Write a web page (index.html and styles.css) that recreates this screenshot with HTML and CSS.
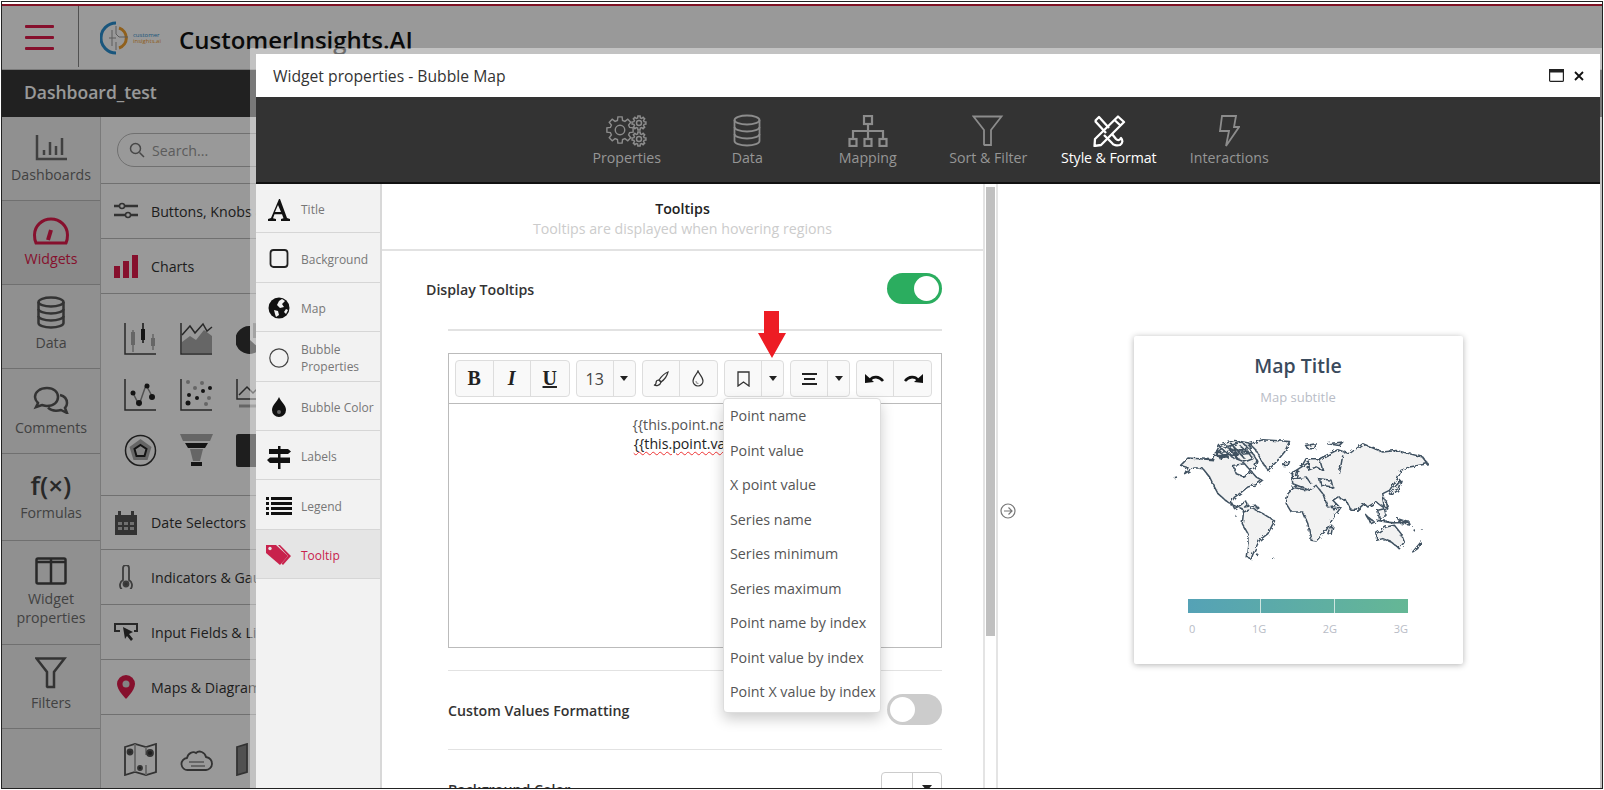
FILE: index.html
```html
<!DOCTYPE html>
<html lang="en">
<head>
  <meta charset="UTF-8" />
  <meta name="viewport" content="width=device-width, initial-scale=1.0"/>
  <title>Widget properties - Bubble Map</title>
  <link rel="stylesheet" href="styles.css">
</head>
<body>

<svg class="sprite" width="0" height="0">
  <defs>
    <g id="gear">
      <polygon points="-2.7,-10.1 -2.2,-13.8 2.2,-13.8 2.7,-10.1 5.2,-9.05 8.2,-11.3 11.3,-8.2 9.05,-5.2 10.1,-2.7 13.8,-2.2 13.8,2.2 10.1,2.7 9.05,5.2 11.3,8.2 8.2,11.3 5.2,9.05 2.7,10.1 2.2,13.8 -2.2,13.8 -2.7,10.1 -5.2,9.05 -8.2,11.3 -11.3,8.2 -9.05,5.2 -10.1,2.7 -13.8,2.2 -13.8,-2.2 -10.1,-2.7 -9.05,-5.2 -11.3,-8.2 -8.2,-11.3 -5.2,-9.05"/>
      <circle r="5"/>
    </g>
    <g id="db">
      <ellipse cx="14" cy="6" rx="12.5" ry="4.5"/>
      <path d="M1.5 6v21c0 2.5 5.6 4.5 12.5 4.5s12.5-2 12.5-4.5V6"/>
      <path d="M1.5 13c0 2.5 5.6 4.5 12.5 4.5s12.5-2 12.5-4.5M1.5 20c0 2.5 5.6 4.5 12.5 4.5s12.5-2 12.5-4.5"/>
    </g>
    <g id="funnel">
      <path d="M1.5 1.5h28L19 15v15l-6.500 0-.5-.5V15z"/>
    </g>
    <filter id="rough" x="-2%" y="-2%" width="104%" height="104%">
      <feTurbulence type="fractalNoise" baseFrequency=".09" numOctaves="2" seed="4"/>
      <feDisplacementMap in="SourceGraphic" scale="13"/>
    </filter>
  </defs>
</svg>

<div class="screen">
  <div class="app">
    <header class="topbar">
      <div class="burger"><span></span><span></span><span></span></div>
      <div class="brand">
        <svg class="logo" width="66" height="34" viewBox="0 0 66 34">
          <path d="M16 2A15 15 0 0 0 16 32" fill="none" stroke="#2b8fd0" stroke-width="3"/>
          <path d="M19 7A10.500 10.500 0 0 1 19 27" fill="none" stroke="#f0a030" stroke-width="3"/>
          <path d="M9 17h7M12 9v16M16 5v8l3 3h9M16 29v-8" fill="none" stroke="#999" stroke-width="1"/>
          <text x="33" y="16" class="logo-a">customer</text>
          <text x="33" y="22" class="logo-b">insights.ai</text>
        </svg>
        <span class="brand-name">CustomerInsights.AI</span>
      </div>
    </header>
    <div class="dashbar">Dashboard_test</div>

    <div class="workspace">
      <nav class="rail">
        <div class="rail-item">
          <svg width="32" height="26" viewBox="0 0 32 26" fill="none" stroke="#6b6b6b" stroke-width="2.500"><path d="M2 0v24h30"/><path d="M9 20v-5M15 20V7M21 20v-9M27 20V3"/></svg>
          <span>Dashboards</span>
        </div>
        <div class="rail-item active">
          <svg width="36" height="28" viewBox="0 0 36 28" fill="none" stroke="#e01b4c" stroke-width="3"><path d="M3 26c-1.500-3-1.500-5-1.500-8a16.500 16 0 0 1 33 0c0 3 0 5-1.500 8z"/><path d="M15 23l3-10" stroke-width="4"/></svg>
          <span>Widgets</span>
        </div>
        <div class="rail-item">
          <svg width="28" height="33" viewBox="0 0 28 33" fill="none" stroke="#555" stroke-width="2.500"><use href="#db"/></svg>
          <span>Data</span>
        </div>
        <div class="rail-item">
          <svg width="36" height="28" viewBox="0 0 36 28" fill="none" stroke="#555" stroke-width="2.500"><path d="M14 2C7 2 2 6 2 11c0 2.500 1 4 3 6l-2 4 6-2c2 .6 3 1 5 1 7 0 11-4 11-9s-4-9-11-9z"/><path d="M27 9c4 1 7 4 7 8 0 2-1 4-2 5l2 5-6-3c-2 .6-3 .7-5 .7-3 0-6-1-8-3"/></svg>
          <span>Comments</span>
        </div>
        <div class="rail-item">
          <span class="fx">f(×)</span>
          <span>Formulas</span>
        </div>
        <div class="rail-item">
          <svg width="32" height="28" viewBox="0 0 32 28" fill="none" stroke="#444" stroke-width="2.500"><rect x="1.500" y="1.500" width="29" height="25" rx="1.500"/><path d="M16 2v24M2 5h28" /></svg>
          <span>Widget<br>properties</span>
        </div>
        <div class="rail-item">
          <svg width="32" height="32" viewBox="0 0 32 32" fill="none" stroke="#555" stroke-width="2.500"><use href="#funnel"/></svg>
          <span>Filters</span>
        </div>
        <div class="rail-item"></div>
      </nav>

      <aside class="library">
        <div class="search-wrap">
          <div class="search">
            <svg width="16" height="16" viewBox="0 0 16 16" fill="none" stroke="#777" stroke-width="1.500"><circle cx="6.500" cy="6.500" r="5"/><path d="M10.500 10.500L15 15"/></svg>
            <span>Search...</span>
          </div>
        </div>
        <div class="lib-row">
          <svg width="24" height="18" viewBox="0 0 24 18" fill="none" stroke="#555" stroke-width="2.500"><path d="M0 4h5M11 4h13M0 13h11M17 13h7"/><circle cx="8" cy="4" r="2.500" stroke-width="1.500"/><circle cx="14" cy="13" r="2.500" stroke-width="1.500"/></svg>
          <span>Buttons, Knobs &amp; Sliders</span>
        </div>
        <div class="lib-row">
          <svg width="24" height="24" viewBox="0 0 24 24" fill="#e01b4c"><rect x="0" y="12" width="6" height="12"/><rect x="9" y="7" width="6" height="17"/><rect x="18" y="1" width="6" height="23"/></svg>
          <span>Charts</span>
        </div>
        <div class="icon-grid">
          <svg width="33" height="33" viewBox="0 0 33 33" fill="none" stroke="#444" stroke-width="1.500"><path d="M1 1v31h31"/><path d="M9 8v22M29 12v16" stroke="#aaa"/><path d="M19 1v20" stroke="#222"/><rect x="7" y="10" width="4" height="13" fill="#aaa" stroke="none"/><rect x="17" y="7" width="4" height="11" fill="#222" stroke="none"/><rect x="27" y="16" width="4" height="8" fill="#aaa" stroke="none"/></svg>
          <svg width="33" height="33" viewBox="0 0 33 33" fill="none" stroke="#444" stroke-width="1.500"><path d="M1 1v31h31"/><path d="M2 31V20l8-6 6 4 8-10 8 6v17z" fill="#aaa" stroke="none"/><path d="M2 13l8-9 5 7 8-9 4 7 5-4"/></svg>
          <svg width="33" height="33" viewBox="0 0 33 33" fill="#333"><path d="M14 4A14 14 0 1 0 24 27L14 18z"/><path d="M17 1A15 15 0 0 1 32 16H17z" fill="#aaa"/></svg>
          <svg width="33" height="33" viewBox="0 0 33 33" fill="none" stroke="#444" stroke-width="1.500"><path d="M1 1v31h31"/><path d="M9 15l6 12 7-20 6 11" stroke="#888"/><g fill="#222" stroke="none"><circle cx="9" cy="15" r="2.500"/><circle cx="15" cy="25" r="3"/><circle cx="23" cy="8" r="2.500"/><circle cx="28" cy="19" r="3"/></g></svg>
          <svg width="33" height="33" viewBox="0 0 33 33" fill="none" stroke="#444" stroke-width="1.500"><path d="M1 1v31h31"/><g fill="#aaa" stroke="none"><circle cx="8" cy="4" r="2"/><circle cx="15" cy="10" r="2"/><circle cx="22" cy="5" r="2"/><circle cx="29" cy="20" r="2"/><circle cx="26" cy="26" r="2"/></g><g fill="#222" stroke="none"><circle cx="23" cy="13" r="2"/><circle cx="30" cy="10" r="2"/><circle cx="8" cy="25" r="2.500"/><circle cx="17" cy="20" r="2"/><circle cx="9" cy="17" r="2"/></g></svg>
          <svg width="33" height="33" viewBox="0 0 33 33" fill="none" stroke="#444" stroke-width="1.500"><path d="M1 1v20h31"/><path d="M3 17l8-8 6 6 10-10"/><path d="M3 28h26" stroke="#aaa" stroke-width="3"/></svg>
          <svg width="33" height="33" viewBox="0 0 33 33" fill="none" stroke="#333" stroke-width="1.500"><circle cx="16.500" cy="16.500" r="15"/><path d="M16.500 5l11 8-4 13h-14l-4-13z" fill="#aaa" stroke="none"/><path d="M16.500 11l6 4-2 7h-8l-2-7z" fill="#ddd" stroke="#222" stroke-width="2"/></svg>
          <svg width="33" height="33" viewBox="0 0 33 33" fill="#aaa"><path d="M0 0h33l-3 7H3z"/><path d="M5 9h23l-3 5H8z" fill="#222"/><path d="M10 15h13l-3 12h-7z"/><rect x="11" y="28" width="11" height="4" fill="#222"/></svg>
          <svg width="33" height="33" viewBox="0 0 33 33" fill="#333"><rect width="33" height="33" rx="2"/></svg>
        </div>
        <div class="lib-row tall">
          <svg width="24" height="24" viewBox="0 0 24 24" fill="#555"><path d="M1 4h3V0h3v4h10V0h3v4h3v20H1z"/><g fill="#bbb"><rect x="4" y="11" width="4" height="3"/><rect x="10" y="11" width="4" height="3"/><rect x="16" y="11" width="4" height="3"/><rect x="4" y="16" width="4" height="3"/><rect x="10" y="16" width="4" height="3"/><rect x="16" y="16" width="4" height="3"/></g></svg>
          <span>Date Selectors</span>
        </div>
        <div class="lib-row">
          <svg width="24" height="24" viewBox="0 0 24 24" fill="none" stroke="#666" stroke-width="1.800"><path d="M9 15V3a3 3 0 0 1 6 0v12a6 6 0 1 1-6 0z"/><circle cx="12" cy="19" r="2.500" fill="#555"/></svg>
          <span>Indicators &amp; Gauges</span>
        </div>
        <div class="lib-row">
          <svg width="24" height="20" viewBox="0 0 24 20" fill="none" stroke="#444" stroke-width="2"><path d="M6 9H1V2h22v7h-3"/><path d="M9 5l10 5-4 2 4 5-2 2-4-5-2 3z" fill="#333" stroke="none"/></svg>
          <span>Input Fields &amp; Lists</span>
        </div>
        <div class="lib-row">
          <svg width="24" height="24" viewBox="0 0 24 24"><path d="M12 0a9 9 0 0 0-9 9c0 6 9 15 9 15s9-9 9-15a9 9 0 0 0-9-9z" fill="#e01b4c"/><circle cx="12" cy="9" r="3.500" fill="#ddd"/></svg>
          <span>Maps &amp; Diagrams</span>
        </div>
        <div class="icon-grid last">
          <svg width="33" height="33" viewBox="0 0 33 33" fill="none" stroke="#555" stroke-width="1.800"><path d="M1 4l10-3 11 3 10-3v28l-10 3-11-3-10 3z"/><path d="M11 1v28M22 4v8M22 22v10" stroke="#aaa"/><circle cx="6" cy="9" r="2.500" fill="#444"/><circle cx="26" cy="10" r="3" fill="#333"/><circle cx="16" cy="25" r="2" fill="#333"/></svg>
          <svg width="33" height="33" viewBox="0 0 33 33" fill="none" stroke="#555" stroke-width="1.800"><path d="M8 27a6 6 0 0 1-1-12c1-5 6-7 9-5 3-3 9-1 10 4 5 1 6 4 6 7s-3 6-6 6z"/><path d="M9 19h15M11 23h14" stroke="#aaa"/></svg>
          <svg width="33" height="33" viewBox="0 0 33 33" fill="none" stroke="#555" stroke-width="1.800"><path d="M1 4l10-3v28l-10 3z" fill="#888"/></svg>
        </div>
      </aside>
    </div>
    <div class="dim"></div>
  </div>

  <section class="modal">
    <div class="modal-title">
      <span>Widget properties - Bubble Map</span>
      <div class="window-btns">
        <svg width="15" height="13" viewBox="0 0 15 13" fill="none" stroke="#222" stroke-width="1.200"><rect x=".6" y=".6" width="13.800" height="11.800" rx="1"/><rect x="0" y="0" width="15" height="3.500" fill="#222" stroke="none"/></svg>
        <svg width="10" height="10" viewBox="0 0 10 10" fill="none" stroke="#111" stroke-width="1.800"><path d="M1 1l8 8M9 1l-8 8"/></svg>
      </div>
    </div>

    <div class="tabs">
      <div class="tab">
        <svg width="42" height="32" viewBox="0 0 42 32" fill="none" stroke="#8c8c8c" stroke-width="1.500">
          <use href="#gear" transform="translate(14 15) scale(.95)"/>
          <use href="#gear" transform="translate(33 8) scale(.5)" stroke-width="3"/>
          <use href="#gear" transform="translate(33 24) scale(.5)" stroke-width="3"/>
        </svg>
        <span>Properties</span>
      </div>
      <div class="tab">
        <svg width="28" height="33" viewBox="0 0 28 33" fill="none" stroke="#8c8c8c" stroke-width="1.800"><use href="#db"/></svg>
        <span>Data</span>
      </div>
      <div class="tab">
        <svg width="40" height="32" viewBox="0 0 40 32" fill="none" stroke="#8c8c8c" stroke-width="2.200"><rect x="16" y="1" width="8" height="8"/><path d="M20 9v7M5 23v-7h30v7M20 16v7"/><rect x="1.500" y="24" width="7" height="7"/><rect x="16.500" y="24" width="7" height="7"/><rect x="31.500" y="24" width="7" height="7"/></svg>
        <span>Mapping</span>
      </div>
      <div class="tab">
        <svg width="32" height="32" viewBox="0 0 32 32" fill="none" stroke="#8c8c8c" stroke-width="1.800"><use href="#funnel"/></svg>
        <span>Sort &amp; Filter</span>
      </div>
      <div class="tab active">
        <svg width="34" height="32" viewBox="0 0 34 32" fill="none" stroke="#fff" stroke-width="2.300" stroke-linejoin="round"><path d="M3 6l4-4 10 11M12 20l8 8c1 2 5 3 8 2 3-2 3-5 1-7-1 2-3 3-5 1l-4-5"/><path d="M3 6l11 12"/><path d="M26 1.500l6 5.500L9 30l-6.500 1 .5-7zM22.500 5l6 5.500"/></svg>
        <span>Style &amp; Format</span>
      </div>
      <div class="tab">
        <svg width="22" height="32" viewBox="0 0 22 32" fill="none" stroke="#8c8c8c" stroke-width="1.800"><path d="M4 1h14l-2 11h5L8 31l3-15H2z"/></svg>
        <span>Interactions</span>
      </div>
    </div>

    <div class="modal-body">
      <ul class="side">
        <li>
          <svg width="24" height="24" viewBox="0 0 24 24" fill="#111"><path d="M12 1h1l7 19 3 1v2h-9v-2l2.500-.7-1.500-4H7.500l-1.500 4 3 .7v2H1v-2l3-1zM11 7l-3 7h6z"/></svg>
          <span>Title</span>
        </li>
        <li>
          <svg width="24" height="24" viewBox="0 0 24 24" fill="none" stroke="#222" stroke-width="1.800"><rect x="3.500" y="3" width="17" height="17" rx="3"/></svg>
          <span>Background</span>
        </li>
        <li>
          <svg width="24" height="24" viewBox="0 0 24 24"><circle cx="12" cy="12" r="10.500" fill="#111"/><path d="M12 5l3-2 3 2-3 3 2 3-4 1-3-3zM7 14l4 1 1 4-3 2-1-3zM19 13l2 1-2 4-2-2z" fill="#f2f2f2"/></svg>
          <span>Map</span>
        </li>
        <li>
          <svg width="24" height="24" viewBox="0 0 24 24" fill="none" stroke="#444" stroke-width="1.200"><circle cx="12" cy="12" r="9.200"/></svg>
          <span>Bubble Properties</span>
        </li>
        <li>
          <svg width="24" height="24" viewBox="0 0 24 24"><path d="M12 2c2 5 7 8 7 13a7 7 0 0 1-14 0c0-5 5-8 7-13z" fill="#111"/><circle cx="12" cy="17" r="2" fill="#666"/></svg>
          <span>Bubble Color</span>
        </li>
        <li>
          <svg width="24" height="24" viewBox="0 0 24 24" fill="#111"><rect x="11" y="1" width="2.500" height="23"/><path d="M2 4h19l3 2.500L21 9H2zM0 15l3-2.500h20V18H3z"/></svg>
          <span>Labels</span>
        </li>
        <li>
          <svg class="wide" width="26" height="20" viewBox="0 0 26 20" fill="#111"><path d="M0 1h3v3H0zM5 1h21v3H5zM0 6h3v3H0zM5 6h21v3H5zM0 11h3v3H0zM5 11h21v3H5zM0 16h3v3H0zM5 16h21v3H5z"/></svg>
          <span>Legend</span>
        </li>
        <li class="current">
          <svg class="wide" width="26" height="22" viewBox="0 0 26 22"><path d="M0 1h10l12 11-8 9L0 9z" fill="#c8224c"/><path d="M14 1l11 11-8 9-1.500-1.500 6.500-7.500L12 1z" fill="#c8224c"/><circle cx="4" cy="4.500" r="1.700" fill="#e5e5e5"/></svg>
          <span>Tooltip</span>
        </li>
      </ul>

      <div class="settings">
        <div class="settings-head">
          <h3>Tooltips</h3>
          <p>Tooltips are displayed when hovering regions</p>
        </div>
        <div class="setting-row first">
          <span>Display Tooltips</span>
          <span class="toggle on"></span>
        </div>
        <div class="settings-inner">
          <div class="editor">
            <div class="ed-toolbar">
              <div class="ed-group">
                <button class="ed-btn serif bold">B</button>
                <button class="ed-btn serif italic">I</button>
                <button class="ed-btn serif under">U</button>
              </div>
              <div class="ed-group">
                <button class="ed-btn size">13</button>
                <button class="ed-btn caret"></button>
              </div>
              <div class="ed-group">
                <button class="ed-btn">
                  <svg width="16" height="16" viewBox="0 0 16 16" fill="none" stroke="#333" stroke-width="1.200"><path d="M15 1c-3 1-7 5-9 8l2 2c3-2 6-6 7-10z"/><path d="M6 9c-2 0-3 1-3 3 0 1-1 2-2 2 2 1 6 1 7-3z"/></svg>
                </button>
                <button class="ed-btn">
                  <svg width="14" height="17" viewBox="0 0 14 17" fill="none" stroke="#333" stroke-width="1.200"><path d="M7 1c1 3 5 6 5 10a5 5 0 0 1-10 0c0-4 4-7 5-10z"/><path d="M5 11c0 1.500 1 2.500 2.500 2.500" stroke="#999"/></svg>
                </button>
              </div>
              <div class="ed-group">
                <button class="ed-btn">
                  <svg width="13" height="16" viewBox="0 0 13 16" fill="none" stroke="#333" stroke-width="1.300"><path d="M1 1h11v14l-5.500-4L1 15z"/></svg>
                </button>
                <button class="ed-btn caret"></button>
              </div>
              <div class="ed-group">
                <button class="ed-btn">
                  <svg width="15" height="12" viewBox="0 0 15 12" fill="none" stroke="#222" stroke-width="2"><path d="M0 1h15M2 6h11M0 11h15"/></svg>
                </button>
                <button class="ed-btn caret"></button>
              </div>
              <div class="ed-group">
                <button class="ed-btn">
                  <svg width="20" height="11" viewBox="0 0 20 11"><path d="M5 7C8 3 14 3 18 8" fill="none" stroke="#111" stroke-width="2.600"/><path d="M0 1l9 8-9 1z" fill="#111"/></svg>
                </button>
                <button class="ed-btn">
                  <svg width="20" height="11" viewBox="0 0 20 11"><path d="M15 7C12 3 6 3 2 8" fill="none" stroke="#111" stroke-width="2.600"/><path d="M20 1l-9 8 9 1z" fill="#111"/></svg>
                </button>
              </div>
            </div>
            <div class="ed-text">
              <div class="ed-line">{{this.point.name}}</div>
              <div class="ed-line strong"><span class="squiggle">{{this.point.value}}</span></div>
            </div>
          </div>
          <ul class="dropdown">
            <li>Point name</li>
            <li>Point value</li>
            <li>X point value</li>
            <li>Series name</li>
            <li>Series minimum</li>
            <li>Series maximum</li>
            <li>Point name by index</li>
            <li>Point value by index</li>
            <li>Point X value by index</li>
          </ul>
          <svg class="red-arrow" width="28" height="48" viewBox="0 0 28 48"><path d="M6 0h15v22h7L14 47 0 22h6z" fill="#ed1c24"/></svg>
          <div class="setting-row ruled">
            <span>Custom Values Formatting</span>
            <span class="toggle"></span>
          </div>
          <div class="setting-row ruled">
            <span>Background Color</span>
            <span class="color-pick"><i></i><b></b></span>
          </div>
        </div>
      </div>

      <div class="scroll"><div class="thumb"></div></div>

      <div class="preview">
        <svg class="collapse" width="16" height="16" viewBox="0 0 16 16" fill="none" stroke="#777" stroke-width="1.200"><circle cx="8" cy="8" r="7"/><path d="M4 8h8M8.500 4.500L12 8l-3.500 3.500"/></svg>
        <div class="map-card">
          <h4>Map Title</h4>
          <p class="map-sub">Map subtitle</p>
          <svg class="world" width="258" height="125" viewBox="160 320 775 375" fill="#f2f2f2" stroke="#3f5161" stroke-width="4.500" stroke-linejoin="round">
            <g filter="url(#rough)">
              <path d="M183 405L205 383 240 385 282 388 290 365 300 345 345 330 388 338 395 362 412 390 405 412 392 420 410 440 428 450 412 462 385 470 360 490 345 500 335 515 345 535 362 525 378 512 385 522 375 530 405 525 415 530 395 540 372 545 368 535 350 528 330 520 312 505 295 490 282 465 270 440 250 415 225 412 195 430 205 412z"/>
              <path d="M340 405L375 400 392 420 375 440 350 430z" fill="#fff"/>
              <path d="M285 375L310 350 340 345 350 365 320 375zM320 350L365 335 385 350 365 362 340 358zM345 370L385 362 400 385 375 395 350 385zM290 360L330 385M300 350L345 385M320 345L360 390M335 340L375 385M360 345L395 375M300 385L345 372M285 368L390 355M295 380L400 368"/>
              <path d="M390 340L430 328 510 333 495 365 470 395 445 420 425 390 410 360z"/>
              <path d="M490 398L510 394 505 405 490 405zM164 442L172 440M348 558L350 560M412 675L418 675M458 683L464 685"/>
              <path d="M372 545L400 535 430 550 465 572 445 610 420 630 405 660 395 685 380 680 385 640 385 610 368 580z"/>
              <path d="M505 490L530 465 590 465 620 480 640 535 665 530 640 565 620 600 590 632 575 630 565 580 550 545 515 545 500 520z"/>
              <path d="M632 590L640 588 635 612 625 610z"/>
              <path d="M520 460L515 430 545 410 560 385 600 385 655 358 690 370 730 340 790 365 830 360 910 380 925 400 870 410 845 420 835 445 810 480 790 490 795 515 790 530 770 515 745 530 735 520 712 540 695 540 680 510 655 500 640 510 655 525 625 530 610 490 590 465 570 480 545 470z"/>
              <path d="M545 410L570 395 565 420 590 410 610 420 600 385M515 470L555 478M600 445L635 450 640 470 605 465zM530 445L560 440 575 460M670 375L660 430" fill="none"/>
              <path d="M520 425L535 420 530 445 518 445zM835 460L845 450 835 480 815 495 810 490zM558 345L590 340 585 355 565 355zM625 340L670 335 660 345z"/>
              <path d="M740 555L765 575 755 580zM770 570L830 575 870 575 820 578zM775 540L795 535 800 555 780 565zM790 505L800 510 805 535 795 530zM835 565L865 575 875 585 845 580zM880 595L885 600M905 595L910 597"/>
              <path d="M770 610L800 590 825 585 845 610 855 635 840 655 815 635 790 625 772 630z"/>
              <path d="M880 665L905 635 895 655z"/>
            </g>
          </svg>
          <div class="legend-bar"><i></i><i></i><i></i></div>
          <div class="legend-labels"><span>0</span><span>1G</span><span>2G</span><span>3G</span></div>
        </div>
      </div>
    </div>
  </section>
</div>

</body>
</html>
```

FILE: styles.css
```css
* { box-sizing: border-box; }
html, body { margin: 0; height: 100%; overflow: hidden; background: #fff; }
body { font-family: "Open Sans", sans-serif; }
.sprite { position: absolute; }

.screen {
  position: relative; width: 1602px; height: 788px; margin: 1px;
  border: 1px solid #222; padding-top: 2px; overflow: hidden;
}
.app { position: relative; height: 100%; display: flex; flex-direction: column; border-top: 2px solid #d8203f; background: #fff; }
.dim { position: absolute; inset: -2px 0 0 0; background: rgba(0,0,0,.4); }

.topbar { display: flex; height: 64px; border-bottom: 1px solid #ccc; }
.burger { width: 77px; padding: 19px 0 0 23px; border-right: 1px solid #888; margin-bottom: 2px; }
.burger span { display: block; width: 29px; height: 3px; background: #e01b4c; margin-bottom: 8px; border-radius: 1px; }
.brand { display: flex; align-items: center; gap: 14px; padding-left: 21px; }
.logo { display: block; }
.logo-a { font-size: 6px; fill: #2b8fd0; }
.logo-b { font-size: 6px; fill: #f0a030; }
.brand-name { font-size: 24px; font-weight: 600; color: #111; line-height: 1; padding-top: 5px; margin-left: -1px; }

.dashbar { height: 47px; background: #383838; color: #fff; font-size: 17.500px; font-weight: 600; line-height: 44px; padding-left: 22px; }

.workspace { flex: 1; display: flex; min-height: 0; }
.rail {
  width: 99px; flex: none; display: grid; background: #f0f0f0; border-right: 1px solid #ccc;
  grid-template-rows: 84px 84px 84px 85px 87px 104px 84px 1fr;
}
.rail-item {
  display: flex; flex-direction: column; align-items: center; justify-content: flex-end;
  padding-bottom: 16px; gap: 4px; border-bottom: 1px solid #bbb;
  font-size: 14.200px; line-height: 19px; color: #6e6e6e; text-align: center;
}
.rail-item:nth-child(5) { padding-bottom: 18px; }
.rail-item:nth-child(6) { padding-bottom: 17px; }
.rail-item:last-child { border: 0; }
.rail-item.active { background: #e4e4e4; color: #e01b4c; }
.fx { font-size: 26px; font-weight: 600; line-height: 28px; color: #444; }

.library { width: 157px; flex: none; background: #fff; overflow: hidden; }
.search-wrap { height: 67px; padding: 16px 0 0 16px; border-bottom: 1px solid #bbb; }
.search {
  display: flex; align-items: center; gap: 7px; width: 240px; height: 34px; padding-left: 11px;
  border: 1px solid #bbb; border-radius: 17px; font-size: 14.200px; color: #999;
}
.lib-row {
  display: flex; align-items: center; height: 55px; padding-left: 13px; gap: 13px;
  border-bottom: 1px solid #bbb; font-size: 14.200px; color: #333; white-space: nowrap;
}
.lib-row svg { flex: none; }
.lib-row.tall { height: 54px; border-top: 0; }
.icon-grid {
  display: grid; grid-template-columns: repeat(3, 33px); column-gap: 23px; row-gap: 23px; align-content: start;
  padding: 28px 0 0 23px; height: 202px; border-bottom: 1px solid #bbb;
}
.icon-grid.last { height: auto; border: 0; }

.modal {
  position: absolute; left: 254px; top: 52px; width: 1344px; height: 750px;
  display: flex; flex-direction: column; background: #fff;
  box-shadow: 0 0 0 6px rgba(255,255,255,.4);
}
.modal-title {
  height: 43px; flex: none; display: flex; align-items: center; justify-content: space-between;
  padding: 0 16px 0 17px; font-size: 15.700px; font-weight: 500; color: #333;
}
.window-btns { display: flex; align-items: center; gap: 10px; }
.tabs { height: 87px; flex: none; display: flex; justify-content: center; background: #333; border-bottom: 2px solid #111; }
.tab {
  width: 120.500px; display: flex; flex-direction: column; align-items: center; justify-content: flex-end;
  padding-bottom: 15px; gap: 1px; color: #969696; font-size: 14.200px; line-height: 19px;
}
.tab.active { color: #fff; font-weight: 500; letter-spacing: -.1px; }

.modal-body { flex: 1; display: flex; min-height: 0; }
.side { list-style: none; margin: 0; padding: 0; width: 126px; flex: none; background: #f2f2f2; border-right: 2px solid #d8d8d8; }
.side li {
  display: flex; align-items: center; height: 49.400px; padding: 3px 0 0 11px; gap: 10px;
  border-bottom: 1px solid #d6d6d6; font-size: 12px; line-height: 17px; color: #777;
}
.side li svg { flex: none; }
.side li svg.wide { margin: 0 -1px; }
.side li.current { background: #e5e5e5; color: #c8224c; }

.settings { width: 601px; flex: none; color: #333; position: relative; }
.settings-head { height: 67px; border-bottom: 2px solid #e2e2e2; text-align: center; padding-top: 15px; }
.settings-head h3 { margin: 0; font-size: 14.200px; line-height: 19px; font-weight: 600; color: #222; }
.settings-head p { margin: 1px 0 0; font-size: 14.200px; line-height: 19px; color: #ccc; }
.setting-row { display: flex; align-items: center; justify-content: space-between; font-size: 14.200px; font-weight: 600; color: #333; }
.setting-row.first { height: 78px; padding: 0 41px 1px 44px; }
.settings-inner { position: relative; margin: 0 41px 0 66px; border-top: 2px solid #e2e2e2; padding-top: 22px; }
.setting-row.ruled { height: 80px; border-bottom: 1px solid #e2e2e2; }
.toggle { position: relative; width: 55px; height: 31px; border-radius: 16px; background: #ccc; margin-bottom: 2px; }
.toggle::after { content: ""; position: absolute; left: 3px; top: 3px; width: 25px; height: 25px; border-radius: 50%; background: #fff; }
.toggle.on { background: #2bad5f; }
.toggle.on::after { left: 27px; }

.editor { height: 295px; border: 1px solid #bbb; margin-bottom: 22px; }
.editor + .dropdown + .red-arrow + .setting-row { border-top: 1px solid #e2e2e2; }
.ed-toolbar { display: flex; gap: 6.200px; height: 50px; padding: 6px 0 0 6px; background: #fff; border-bottom: 1px solid #bbb; }
.ed-group { display: flex; height: 37px; border: 1px solid #ddd; border-radius: 4px; background: #f9f9f9; }
.ed-btn {
  width: 37px; display: flex; align-items: center; justify-content: center; padding: 0;
  border: 0; border-right: 1px solid #ddd; background: none; font-family: inherit; font-size: 16px; color: #444;
}
.ed-btn:last-child { border-right: 0; }
.ed-btn.serif { width: 37.500px; font-family: "Liberation Serif", serif; font-size: 20px; color: #222; }
.bold { font-weight: 700; }
.italic { font-style: italic; font-weight: 700; }
.under { text-decoration: underline; font-weight: 700; }
.ed-btn.caret { width: 21px; }
.ed-btn.caret::after { content: ""; border: 4px solid transparent; border-top: 5px solid #222; border-bottom: 0; }
.ed-text { text-align: center; padding-top: 11px; font-size: 14.200px; line-height: 19px; color: #555; }
.ed-line.strong { color: #222; font-weight: 500; }
.squiggle { text-decoration: underline wavy #e33 1px; text-underline-offset: 2px; }

.dropdown {
  position: absolute; left: 275px; top: 67px; width: 158px; height: 315px; margin: 0; padding: 0 6px; list-style: none;
  background: #fff; border: 1px solid #ddd; border-radius: 4px; box-shadow: 0 6px 14px rgba(0,0,0,.2);
  font-size: 14.300px; line-height: 34.500px; color: #555; white-space: nowrap;
}
.dropdown li { height: 34.500px; }
.red-arrow { position: absolute; left: 310px; top: -20px; }
.color-pick { display: flex; width: 61px; height: 36px; border: 1px solid #ccc; border-radius: 4px; }
.color-pick i { flex: 1; border-right: 1px solid #ccc; }
.color-pick b { width: 28px; display: flex; justify-content: center; padding-top: 12px; }
.color-pick b::after { content: ""; height: 0; border: 5px solid transparent; border-top: 6px solid #222; border-bottom: 0; }

.scroll { width: 15px; flex: none; border: solid #e4e4e4; border-width: 0 2px; padding: 3px 1px 0; background: #fff; }
.thumb { height: 449px; background: #c0c0c0; }

.preview { flex: 1; position: relative; display: flex; justify-content: center; padding-top: 152px; }
.collapse { position: absolute; left: 2px; top: 319px; }
.map-card {
  width: 329px; height: 328px; margin-right: 2px; background: #fff; box-shadow: 0 1px 6px rgba(0,0,0,.3); border-radius: 2px;
  display: flex; flex-direction: column; align-items: center; padding-top: 17px;
}
.map-card h4 { margin: 0; font-size: 19.500px; line-height: 25px; font-weight: 600; color: #3a4a5c; }
.map-sub { margin: 11px 0 0; font-size: 13px; line-height: 16px; color: #b8bcc6; }
.world { margin: 32px 0 0 7px; flex: none; }
.legend-bar { display: flex; width: 220px; height: 14px; margin-top: 37px; background: linear-gradient(90deg, #55a2b6, #65b795); gap: 1px; }
.legend-bar i { flex: 1; border-right: 1px solid #cfe5e0; }
.legend-bar i:last-child { border: 0; }
.legend-labels { display: flex; justify-content: space-between; width: 220px; margin-top: 8px; font-size: 11px; line-height: 15px; color: #b8bcc6; padding: 0 0 0 1px; }
```
